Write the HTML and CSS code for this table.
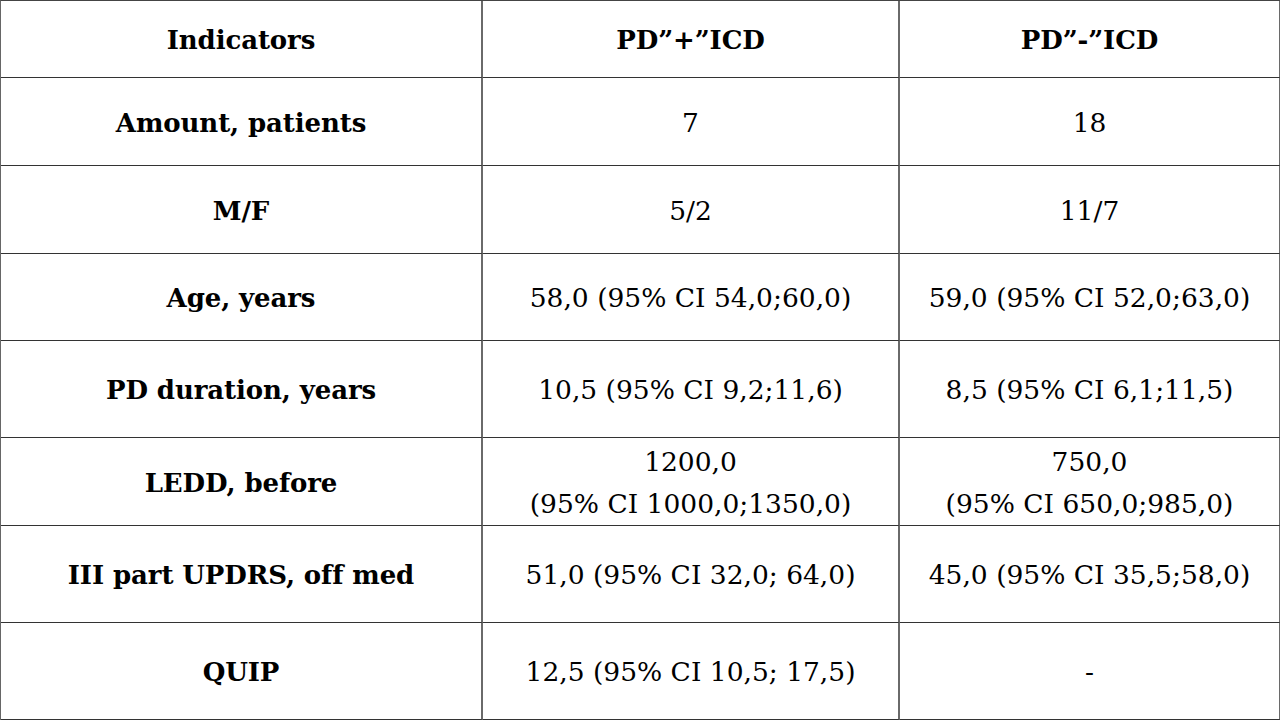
FILE: index.html
```html
<!DOCTYPE html>
<html>
<head>
<meta charset="utf-8">
<link rel="stylesheet" href="styles.css">
</head>
<body>
<div class="table">
  <div class="cell head">Indicators</div>
  <div class="cell head">PD”+”ICD</div>
  <div class="cell head">PD”-”ICD</div>

  <div class="cell head">Amount, patients</div>
  <div class="cell">7</div>
  <div class="cell">18</div>

  <div class="cell head">M/F</div>
  <div class="cell">5/2</div>
  <div class="cell">11/7</div>

  <div class="cell head">Age, years</div>
  <div class="cell">58,0 (95% CI 54,0;60,0)</div>
  <div class="cell">59,0 (95% CI 52,0;63,0)</div>

  <div class="cell head">PD duration, years</div>
  <div class="cell">10,5 (95% CI 9,2;11,6)</div>
  <div class="cell">8,5 (95% CI 6,1;11,5)</div>

  <div class="cell head">LEDD, before</div>
  <div class="cell">1200,0<br>(95% CI 1000,0;1350,0)</div>
  <div class="cell">750,0<br>(95% CI 650,0;985,0)</div>

  <div class="cell head">III part UPDRS, off med</div>
  <div class="cell">51,0 (95% CI 32,0; 64,0)</div>
  <div class="cell">45,0 (95% CI 35,5;58,0)</div>

  <div class="cell head">QUIP</div>
  <div class="cell">12,5 (95% CI 10,5; 17,5)</div>
  <div class="cell">-</div>
</div>
</body>
</html>
```
FILE: styles.css
```css
html, body {
  margin: 0;
  padding: 0;
  background: #ffffff;
}
body {
  width: 1280px;
  height: 720px;
  overflow: hidden;
}
.table {
  display: grid;
  grid-template-columns: 482px 417px 381px;
  grid-template-rows: 77px 88px 88px 87px 97px 88px 97px 97px;
  border-top: 1px solid #444;
  border-left: 1px solid #666;
  box-sizing: border-box;
  width: 1280px;
  font-family: "DejaVu Serif", "Liberation Serif", serif;
  color: #000;
}
.cell {
  display: flex;
  align-items: center;
  justify-content: center;
  text-align: center;
  border-right: 2px solid #6a6a6a;
  border-bottom: 1px solid #333;
  font-size: 26.5px;
  line-height: 42px;
  padding-top: 2px;
  box-sizing: border-box;
}
.head {
  font-weight: bold;
  font-size: 26px;
  letter-spacing: -0.1px;
}
```
